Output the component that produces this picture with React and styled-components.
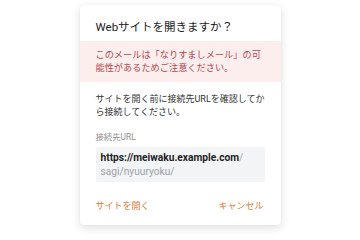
import React from 'react';
import styled, { createGlobalStyle } from 'styled-components';

const GlobalStyle = createGlobalStyle`
  html, body {
    margin: 0;
    padding: 0;
    background: #ffffff;
  }
  body {
    font-family: Roboto, "Noto Sans CJK JP", sans-serif;
    -webkit-font-smoothing: antialiased;
  }
`;

const Page = styled.div`
  width: 360px;
  height: 240px;
  display: flex;
  justify-content: center;
  align-items: flex-start;
  padding-top: 5px;
  box-sizing: border-box;
`;

const Dialog = styled.div`
  width: 201px;
  height: 220px;
  background: #fff;
  border-radius: 4px;
  box-shadow: 0 3px 10px rgba(0, 0, 0, 0.13), 0 0 2px rgba(0, 0, 0, 0.06);
  display: flex;
  flex-direction: column;
  box-sizing: border-box;
  padding: 14px 0 12px;
`;

const Title = styled.h2`
  margin: 0 16px 6px;
  font-size: 11.5px;
  line-height: 16px;
  font-weight: 400;
  color: #222;
`;

const Warning = styled.div`
  background: #fdeeee;
  color: #b5474d;
  font-size: 9.2px;
  line-height: 12.5px;
  padding: 8px 16px;
`;

const Body = styled.p`
  margin: 11px 16px 0;
  font-size: 9px;
  line-height: 13px;
  color: #333;
`;

const Label = styled.div`
  margin: 12px 16px 4px;
  font-size: 8.4px;
  line-height: 12px;
  color: #909090;
`;

const UrlBox = styled.div`
  margin: 0 16px;
  background: #f3f4f6;
  border-radius: 2px;
  padding: 4px 5px 3px;
  font-size: 10.2px;
  line-height: 14px;
`;

const Host = styled.span`
  font-weight: 700;
  color: #1f1f1f;
`;

const Path = styled.span`
  color: #9ea1a6;
`;

const Actions = styled.div`
  margin-top: auto;
  display: flex;
  justify-content: space-between;
  padding: 0 17px 0 16px;
`;

const TextButton = styled.button`
  border: 0;
  background: none;
  padding: 0;
  font-family: inherit;
  font-size: 9px;
  line-height: 13px;
  color: #e07b3a;
  cursor: pointer;
`;

export default function App() {
  return (
    <>
      <GlobalStyle />
      <Page>
        <Dialog>
          <Title>Webサイトを開きますか？</Title>
          <Warning>このメールは「なりすましメール」の可能性があるためご注意ください。</Warning>
          <Body>サイトを開く前に接続先URLを確認してから接続してください。</Body>
          <Label>接続先URL</Label>
          <UrlBox>
            <Host>https://meiwaku.example.com</Host>
            <Path>/</Path>
            <br />
            <Path>sagi/nyuuryoku/</Path>
          </UrlBox>
          <Actions>
            <TextButton>サイトを開く</TextButton>
            <TextButton>キャンセル</TextButton>
          </Actions>
        </Dialog>
      </Page>
    </>
  );
}
